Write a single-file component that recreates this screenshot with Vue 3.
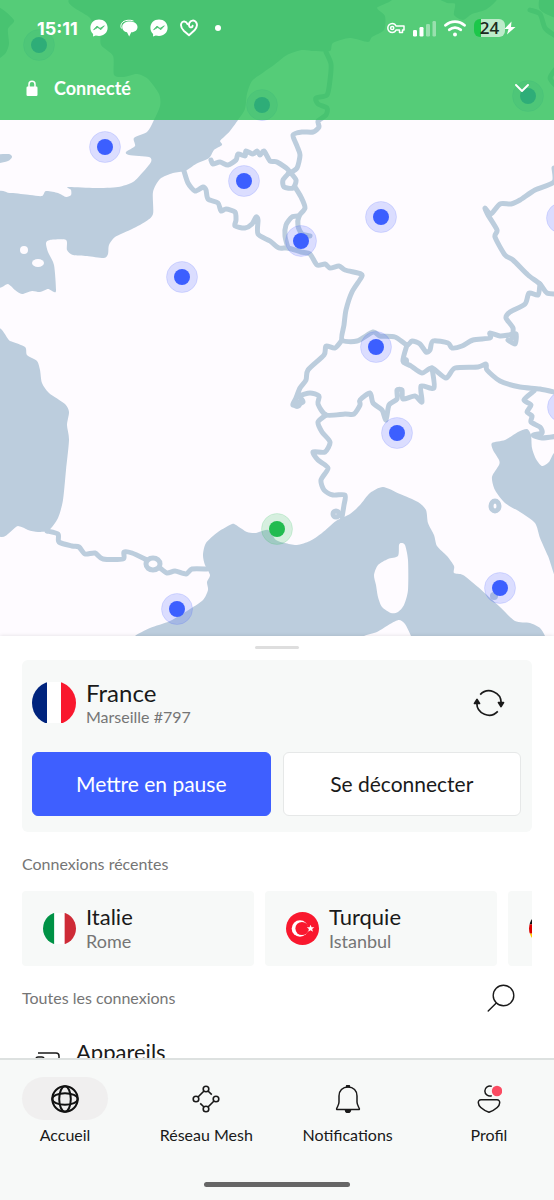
<template>
  <div class="app">
    <!-- Carte -->
    <div class="map-area">
      <svg class="map" viewBox="0 0 554 636" role="img" aria-label="Carte des serveurs">
        <rect width="554" height="636" class="land" />
        <path v-for="(s, i) in seas" :key="'s' + i" :d="smooth(s, true)" class="sea" />
        <path v-for="(l, i) in islands" :key="'l' + i" :d="smooth(l, true)" class="land" />
        <path v-for="(b, i) in borders" :key="'b' + i" :d="smooth(b, false)" class="border" />
        <ellipse cx="24" cy="250" rx="4" ry="4" class="land" />
        <ellipse cx="38" cy="263" rx="6" ry="4" class="land" />
        <ellipse cx="153" cy="564" rx="7" ry="6" class="border" />
        <ellipse cx="495" cy="506" rx="4" ry="5" class="border" />
        <circle cx="336" cy="514" r="3" class="border" />
        <circle cx="494" cy="596" r="4" class="sea" />
        <circle cx="405" cy="361" r="4" class="sea" />
        <circle cx="297" cy="404" r="5" class="sea" />
        <g v-for="(m, i) in markers" :key="'m' + i" :class="['marker', { connected: m.connected }]">
          <circle :cx="m.x" :cy="m.y" r="15.5" class="halo" />
          <circle :cx="m.x" :cy="m.y" r="8" class="dot" />
        </g>
      </svg>

      <header class="top">
        <div class="status-bar">
          <span class="time">15:11</span>
          <svg class="glyph" width="18" height="18" viewBox="0 0 18 18">
            <path d="M9 .5C4 .5.4 4 .4 8.800c0 2.500 1 4.700 2.700 6.200L3 17.600l2.800-1.200c1 .3 2.100.5 3.200.5 5 0 8.600-3.500 8.600-8.200S14 .5 9 .5z" fill="#fff" />
            <path d="M3.600 10.800 7 7.100l3 2.300 4.300-2.600-3.500 3.900-3-2.300z" fill="#4cc473" stroke="#4cc473" stroke-width=".8" />
          </svg>
          <svg class="glyph" width="18" height="18" viewBox="0 0 18 18">
            <path d="M1.500 9.500C.3 7.500.8 4.500 3 2.800 5.500 1 10.500.7 13.500 2" fill="none" stroke="#fff" stroke-width="1" />
            <path d="M9.800 2.500C5.500 2.500 2.200 4.500 2.200 8c0 3 2 4.800 4.800 5.300L9.200 17.500l2-4.200c4-.2 6.300-2.300 6.300-5.300 0-3.300-3.500-5.500-7.700-5.500z" fill="#fff" />
          </svg>
          <svg class="glyph" width="18" height="18" viewBox="0 0 18 18">
            <path d="M9 .5C4 .5.4 4 .4 8.800c0 2.500 1 4.700 2.700 6.200L3 17.600l2.800-1.200c1 .3 2.100.5 3.200.5 5 0 8.600-3.500 8.600-8.200S14 .5 9 .5z" fill="#fff" />
            <path d="M3.600 10.800 7 7.100l3 2.300 4.300-2.600-3.500 3.900-3-2.300z" fill="#4cc473" stroke="#4cc473" stroke-width=".8" />
          </svg>
          <svg class="glyph" width="18" height="18" viewBox="0 0 18 18">
            <path d="M7.500 5.200C6.200 2 2.400 1.600 1.300 4.500c-1 3 .6 5.500 2.700 7.500L9 16.300l5.500-5c2.300-2.600 3.200-6 1.300-8.400-1.800-2.100-5-1.600-6.300.8-.9 1.900-.6 4 .8 4.600 1.200.4 2.200-.4 2.300-1.500" fill="none" stroke="#fff" stroke-width="1.900" stroke-linecap="round" stroke-linejoin="round" />
          </svg>
          <span class="more"></span>
          <div class="status-right">
            <svg width="18" height="12" viewBox="0 0 18 12" fill="none" stroke="#fff" stroke-width="1.500" stroke-linejoin="round">
              <path d="M9 4h8v4h-1.500v2.500h-3V8H9c-.6 1.600-2 2.500-3.700 2.500a4.500 4.500 0 1 1 0-9C7 1.500 8.400 2.400 9 4z" />
              <circle cx="5.200" cy="6" r="1.600" />
            </svg>
            <svg width="23" height="17" viewBox="0 0 23 17" fill="#fff">
              <rect x="0" y="10" width="4" height="6.500" rx="1.200" />
              <rect x="6.500" y="7" width="4" height="9.500" rx="1.200" />
              <rect x="13" y="4" width="4" height="12.500" rx="1.200" opacity=".4" />
              <rect x="19.500" y="1" width="3.500" height="15.500" rx="1.200" opacity=".4" />
            </svg>
            <svg width="22" height="17" viewBox="0 0 22 17" fill="none" stroke="#fff" stroke-width="2.800" stroke-linecap="round">
              <path d="M1.500 5.300c5.500-5 13.500-5 19 0" />
              <path d="M5.300 9.800c3.300-3 8.100-3 11.400 0" />
              <circle cx="11" cy="14.500" r="2" fill="#fff" stroke="none" />
            </svg>
            <span class="battery">
              <span class="level">24</span>
              <svg class="bolt" width="12" height="14" viewBox="0 0 12 14"><path d="M7.500.5.5 8h4l-1.500 5.500L11.500 6h-4.500z" fill="#fff" /></svg>
            </span>
          </div>
        </div>
        <button class="connection" type="button">
          <svg width="12" height="17" viewBox="0 0 12 17">
            <path d="M3 7V4.200a3 3 0 0 1 6 0V7" fill="none" stroke="#fff" stroke-width="1.500" />
            <rect x=".5" y="6.500" width="11" height="9.500" rx="1.200" fill="#fff" />
          </svg>
          <span>Connecté</span>
          <svg class="chevron" width="14" height="9" viewBox="0 0 14 9">
            <path d="m1 1 6 6 6-6" fill="none" stroke="#fff" stroke-width="1.900" stroke-linecap="round" stroke-linejoin="round" />
          </svg>
        </button>
      </header>
    </div>

    <!-- Panneau -->
    <main class="sheet">
      <div class="handle"></div>
      <section class="card">
        <div class="server">
          <svg class="flag-lg" viewBox="0 0 44 44">
            <clipPath id="fr"><circle cx="22" cy="22" r="22" /></clipPath>
            <g clip-path="url(#fr)">
              <rect y="1" width="15" height="41" fill="#00247d" />
              <rect x="15" y="1" width="14" height="41" fill="#fff" />
              <rect x="29" y="1" width="15" height="41" fill="#f9182e" />
            </g>
          </svg>
          <div class="names">
            <span class="country">France</span>
            <span class="city">Marseille #797</span>
          </div>
          <button class="icon-btn refresh" type="button" aria-label="Reconnecter">
            <svg width="32" height="28" viewBox="0 0 32 28" fill="none" stroke="#1a1a1a" stroke-width="1.700">
              <path d="M7.200 5.600A12.200 12.200 0 0 1 28.200 14" />
              <path d="M24.800 22.400A12.200 12.200 0 0 1 3.800 14" />
              <path d="M25.500 13.500h5L28 17.500z" fill="#1a1a1a" stroke-linejoin="round" />
              <path d="M1.500 14.500h5L4 10.500z" fill="#1a1a1a" stroke-linejoin="round" />
            </svg>
          </button>
        </div>
        <div class="actions">
          <button class="btn btn-primary" type="button">Mettre en pause</button>
          <button class="btn" type="button">Se déconnecter</button>
        </div>
      </section>

      <h2 class="section-title">Connexions récentes</h2>
      <div class="recents">
        <button v-for="r in recents" :key="r.flag" class="recent" type="button">
          <svg class="flag" viewBox="0 0 32 32">
            <clipPath :id="'clip-' + r.flag"><circle cx="16" cy="16" r="16" /></clipPath>
            <g :clip-path="'url(#clip-' + r.flag + ')'">
              <template v-if="r.flag === 'it'">
                <rect y="1" width="11" height="30" fill="#009246" />
                <rect x="11" y="1" width="10" height="30" fill="#fff" />
                <rect x="21" y="1" width="11" height="30" fill="#ce2b37" />
              </template>
              <template v-else-if="r.flag === 'tr'">
                <rect width="32" height="32" fill="#f9182e" />
                <circle cx="13.500" cy="16" r="8" fill="#fff" />
                <circle cx="15.500" cy="16" r="6.400" fill="#f9182e" />
                <path d="m23.800 12.300 1 2.500 2.700.1-2.100 1.700.7 2.600-2.300-1.500-2.300 1.500.7-2.600-2.100-1.700 2.700-.1z" fill="#fff" />
              </template>
              <template v-else>
                <rect width="32" height="12" fill="#111" />
                <rect y="12" width="32" height="9" fill="#d00" />
                <rect y="21" width="32" height="11" fill="#fc0" />
              </template>
            </g>
          </svg>
          <span v-if="r.country" class="names">
            <span class="country">{{ r.country }}</span>
            <span class="city">{{ r.city }}</span>
          </span>
        </button>
      </div>

      <div class="all-head">
        <h2 class="section-title">Toutes les connexions</h2>
        <button class="icon-btn" type="button" aria-label="Rechercher">
          <svg width="28" height="28" viewBox="0 0 28 28" fill="none" stroke="#1a1a1a" stroke-width="1.400" stroke-linecap="round">
            <circle cx="16.500" cy="11.500" r="10.300" />
            <path d="M9.300 19 1.200 27" />
          </svg>
        </button>
      </div>
      <a class="device" href="#">
        <svg width="26" height="22" viewBox="0 0 26 22" fill="none" stroke="#1a1a1a" stroke-width="1.500">
          <path d="M3 1h18c2 0 3 1 3 3v13H10" />
          <rect x="1" y="5" width="8" height="14" rx="2" />
        </svg>
        <span>Appareils</span>
      </a>
    </main>

    <!-- Navigation -->
    <footer class="bottom">
      <nav class="tabs">
        <a v-for="t in tabs" :key="t.id" href="#" class="tab" :class="{ active: activeTab === t.id }" @click.prevent="activeTab = t.id">
          <span class="tab-icon">
            <svg v-if="t.id === 'home'" width="28" height="28" viewBox="0 0 28 28" fill="none" stroke="#111" stroke-width="2">
              <circle cx="14" cy="14" r="12.700" />
              <ellipse cx="14" cy="14" rx="5.800" ry="12.700" />
              <ellipse cx="14" cy="14" rx="12.700" ry="5.800" />
            </svg>
            <svg v-else-if="t.id === 'mesh'" width="28" height="28" viewBox="0 0 28 28" fill="none" stroke="#1a1a1a" stroke-width="1.600">
              <circle cx="14" cy="4" r="2.800" />
              <circle cx="4" cy="14" r="2.800" />
              <circle cx="24" cy="14" r="2.800" />
              <circle cx="14" cy="24" r="2.800" />
              <path d="m6 12 6-6M16 6l3.800 3.600M22 16l-6 6M12 22l-3.800-3.600" />
            </svg>
            <svg v-else-if="t.id === 'notif'" width="26" height="28" viewBox="0 0 26 28" fill="none" stroke="#1a1a1a" stroke-width="1.500" stroke-linejoin="round">
              <path d="M13 2C7.500 2 4 5.800 4 11v6c0 2.500-1.300 4.300-2.300 6.500-.3.700 0 1 .6 1h21.400c.6 0 .9-.3.600-1C23.300 21.300 22 19.500 22 17v-6c0-5.200-3.500-9-9-9z" />
              <path d="M11.500 1.700a1.500 1.500 0 0 1 3 0zM10.500 25a2.500 2.500 0 0 0 5 0z" fill="#1a1a1a" />
            </svg>
            <svg v-else width="26" height="28" viewBox="0 0 26 28" fill="none" stroke="#1a1a1a" stroke-width="1.500" stroke-linejoin="round">
              <path d="M15.800 10.600A5 5 0 1 1 15.800 1.400" />
              <path d="M5 14.800h16c1.800 0 2.800 1.200 2.700 3-.2 4.700-4.200 7-10.700 9.400C6.500 24.800 2.500 22.500 2.300 17.800c-.1-1.800.9-3 2.700-3z" />
              <circle cx="21" cy="6" r="5.200" fill="#fb4b62" stroke="none" />
            </svg>
          </span>
          <span class="tab-label">{{ t.label }}</span>
        </a>
      </nav>
      <div class="home-bar"></div>
    </footer>
  </div>
</template>

<script setup>
import { ref } from 'vue'

const activeTab = ref('home')

const tabs = [
  { id: 'home', label: 'Accueil' },
  { id: 'mesh', label: 'Réseau Mesh' },
  { id: 'notif', label: 'Notifications' },
  { id: 'profile', label: 'Profil' },
]

const recents = [
  { country: 'Italie', city: 'Rome', flag: 'it' },
  { country: 'Turquie', city: 'Istanbul', flag: 'tr' },
  { flag: 'de' },
]

const markers = [
  { x: 39, y: 45 },
  { x: 262, y: 105 },
  { x: 528, y: 96 },
  { x: 105, y: 147 },
  { x: 244, y: 181 },
  { x: 381, y: 217 },
  { x: 562, y: 218 },
  { x: 301, y: 241 },
  { x: 182, y: 277 },
  { x: 376, y: 347 },
  { x: 563, y: 407 },
  { x: 397, y: 433 },
  { x: 500, y: 588 },
  { x: 177, y: 609 },
  { x: 277, y: 529, connected: true },
]

// Tracés "x,y x,y ..." de la carte
const seas = [
  // mer du Nord et Manche
  '83,-4 90,18 100,32 101,45 113,56 114,75 124,77 137,74 148,79 159,94 160,106 153,122 147,132 134,138 135,146 126,152 129,155 149,157 151,162 143,172 133,182 118,187 95,188 68,187 71,190 71,195 66,197 58,193 46,191 42,196 30,195 10,193 -4,197 -4,283 8,284 15,290 22,294 32,291 40,292 48,289 54,292 56,290 54,265 48,252 46,243 50,240 66,240 67,250 73,255 87,256 104,258 108,254 109,245 115,237 130,230 145,222 153,214 153,192 160,179 173,173 185,171 196,164 209,158 214,150 222,145 220,141 224,137 230,131 238,120 245,109 247,94 252,81 264,72 274,65 287,55 302,50 314,51 330,51 333,43 350,38 368,42 372,37 384,30 385,16 377,8 376,-4',
  // golfe de Gascogne
  '-4,338 10,341 25,347 27,355 37,361 40,370 42,383 49,393 65,404 69,412 67,425 69,440 66,470 63,500 58,518 49,530 38,532 28,530 18,526 -4,527',
  // Méditerranée
  '128,645 135,636 150,628 170,621 190,609 203,600 208,590 207,582 210,575 205,565 203,555 206,543 218,532 232,524 236,525 247,532 256,533 268,530 276,540 285,543 297,545 310,541 322,533 336,521 350,514 360,505 370,493 383,487 400,494 418,502 426,510 428,523 434,535 437,546 447,556 454,566 454,573 463,575 478,587 500,607 515,621 530,623 540,628 545,636 548,645',
  // Adriatique
  '560,580 548,556 540,538 535,523 520,512 505,503 495,490 492,477 499,465 499,460 493,450 492,443 505,440 518,432 527,429 531,435 532,448 536,459 542,466 549,462 554,453 562,450',
  // Bristol, mer d'Irlande
  '-4,155 9,154 12,157 8,161 -4,163',
  '-4,8 14,20 8,29 9,44 5,54 -4,56',
  // Baltique
  '438,-4 447,3 455,4 454,15 463,20 472,14 487,9 496,-4',
  '541,-4 539,8 546,14 560,18 560,-4',
]

const islands = [
  '401,543 405,545 408,560 408,590 404,605 398,612 391,613 382,607 378,597 376,585 374,575 378,565 388,559 398,556 399,545',
  '355,645 364,636 377,632 390,624 399,620 405,624 411,636 414,645',
]

const borders = [
  '184,171 188,183 195,191 203,187 206,190 208,199 218,203 221,211 226,209 235,212 236,220 235,226 245,228 252,224 256,217 258,220 258,234 270,241 279,248 288,248 301,252 310,254 317,265 325,264 330,268 339,266 345,270 361,274 361,278 352,292 346,310 344,325 342,340 357,341 373,332 380,336 395,337 407,345 412,341 420,344 426,352 430,350 433,341 448,343 452,348 462,346 473,340 490,338 490,333 500,336 509,335 516,334 515,344 508,340',
  '211,160 213,164 220,162 228,165 236,160 238,154 245,156 246,151 253,154 257,151 260,155 264,151 270,161 277,162 289,171 283,180 284,187 293,188 296,180 290,172',
  '326,52 331,64 330,80 327,95 316,98 318,104 327,108 326,115 318,121 319,127 313,132 302,132 293,135 297,146 300,155 297,168 290,173',
  '295,187 301,197 305,208 299,216 298,226 302,234 310,236',
  '299,216 292,217 286,225 285,236 288,248',
  '554,168 554,182 535,190 520,200 511,204 500,204 491,214 485,208 488,215 497,230 495,237 505,255 513,260 528,275 540,284 547,293 558,294',
  '540,284 538,295 529,293 525,304 510,312 506,318 513,328 512,338',
  '342,340 335,348 326,346 324,355 308,370 306,380 300,388 296,398 293,405 303,402 300,396 310,393 319,396 318,404 326,415 345,414 354,414 360,405 360,400 370,393 373,403 382,410 386,420 389,405 397,399 397,390 402,390 403,399 415,396 422,402 421,386 434,388 432,368',
  '407,345 403,361 411,366 422,373 432,368 446,378 455,368 478,367 486,364 487,370 500,381 520,387 540,389 558,393',
  '326,415 318,422 322,432 330,442 325,452 313,452 318,460 328,468 321,480 324,490 333,495 345,495 344,505 342,517',
  '534,391 524,400 531,405 527,412 532,416 531,422 540,427 542,433 533,435 542,438 558,436',
  '47,531 58,534 59,542 72,546 79,547 85,554 95,553 103,559 123,559 124,552 132,553 147,560',
  '160,568 167,573 175,571 186,574 192,569 207,569',
  '530,10 540,14 545,28 554,35',
  '558,66 550,78 558,88',
  '253,73 260,62 268,58 276,54',
]

// Courbe de Catmull-Rom convertie en Bézier
function smooth(text, closed) {
  const pts = text.split(' ').map(p => p.split(',').map(Number))
  const n = pts.length
  const at = i => (closed ? pts[(i + n) % n] : pts[Math.max(0, Math.min(n - 1, i))])
  let d = `M${pts[0]}`
  for (let i = 0; i < (closed ? n : n - 1); i++) {
    const [p0, p1, p2, p3] = [at(i - 1), at(i), at(i + 1), at(i + 2)]
    const c1 = [p1[0] + (p2[0] - p0[0]) / 8, p1[1] + (p2[1] - p0[1]) / 8]
    const c2 = [p2[0] - (p3[0] - p1[0]) / 8, p2[1] - (p3[1] - p1[1]) / 8]
    // les grands côtés (hors cadre) restent droits
    const far = Math.hypot(p2[0] - p1[0], p2[1] - p1[1]) > 80
    d += far ? `L${p2}` : `C${c1} ${c2} ${p2}`
  }
  return closed ? d + 'Z' : d
}
</script>

<style>
body { margin: 0; background: #fff; }
</style>

<style scoped>
.app { display: flex; flex-direction: column; height: 100vh; overflow: hidden; font-family: Lato, sans-serif; color: #1a1a1a; background: #fff; }
button { font-family: inherit; color: inherit; cursor: pointer; }
a { color: inherit; text-decoration: none; }
svg { flex: none; }

.map-area { position: relative; flex: none; }
.map { display: block; width: 100%; height: auto; }
.land { fill: #fefbff; }
.sea { fill: #bccddd; }
.border { fill: none; stroke: #bccddd; stroke-width: 5; stroke-linejoin: round; stroke-linecap: round; }
.halo { fill: #3c5aff; fill-opacity: .18; stroke: #3c5aff; stroke-opacity: .15; }
.dot { fill: #3c5fff; }
.connected .halo { fill: #22bb50; stroke: #22bb50; }
.connected .dot { fill: #22bb50; }

.top { position: absolute; top: 0; left: 0; right: 0; height: 120px; background: rgba(42, 192, 86, .8); color: #fff; }
.status-bar { display: flex; align-items: center; height: 56px; padding: 0 38px 0 37px; }
.time { font-family: Inter, sans-serif; font-size: 18px; font-weight: 700; width: 53px; }
.glyph { margin-right: 12px; }
.more { width: 6px; height: 6px; border-radius: 50%; background: #fff; margin-left: 5px; }
.status-right { display: flex; align-items: center; gap: 8px; margin-left: auto; }
.battery { display: flex; align-items: center; }
.level { width: 31px; height: 18px; line-height: 18px; border-radius: 6px; background: linear-gradient(90deg, #1cc74a 24%, #bdebca 24%); color: #1c2a20; font-family: "Open Sans", sans-serif; font-size: 17px; font-weight: 600; text-align: center; }
.bolt { margin-left: -1px; }
.connection { display: flex; align-items: center; width: 100%; height: 64px; padding: 0 25px 0 26px; border: 0; background: none; color: #fff; font-size: 18px; font-weight: 700; }
.connection span { margin-left: 16px; }
.chevron { margin-left: auto; }

.sheet { flex: 1; min-height: 0; overflow: hidden; padding: 10px 22px 0; background: #fff; box-shadow: 0 0 4px rgba(0, 0, 0, .12); position: relative; }
.handle { width: 44px; height: 3px; margin: 0 auto 11px; border-radius: 2px; background: #dedede; }
.card { padding: 19px 11px 16px 10px; border-radius: 6px; background: #f7f9f8; }
.server { display: flex; align-items: center; gap: 10px; margin-bottom: 25px; }
.flag-lg { width: 44px; height: 44px; }
.names { display: flex; flex-direction: column; text-align: left; }
.server .country { font-size: 24px; line-height: 28px; }
.server .city { font-size: 16px; line-height: 20px; }
.city { color: #757575; }
.icon-btn { display: flex; padding: 0; border: 0; background: none; }
.refresh { margin: 0 16px 0 auto; }
.actions { display: flex; gap: 12px; }
.btn { flex: 1; height: 64px; padding: 0 6px 2px; border: 1px solid #e6e8e8; border-radius: 6px; background: #fff; font-size: 21px; }
.btn-primary { background: #3e5fff; border-color: #3e5fff; color: #fff; }

.section-title { margin: 0; font-size: 16px; font-weight: 400; line-height: 20px; color: #757575; }
.card + .section-title { margin: 22px 0 17px; }
.recents { display: flex; gap: 11px; overflow: hidden; }
.recent { display: flex; flex: none; align-items: center; gap: 10px; width: 232px; height: 75px; padding: 0 21px; border: 0; border-radius: 4px; background: #f7f9f8; }
.flag { width: 33px; height: 33px; }
.recent .country { font-size: 22px; line-height: 25px; }
.recent .city { font-size: 18px; line-height: 24px; }
.all-head { display: flex; align-items: center; justify-content: space-between; height: 64px; padding-right: 17px; }
.device { display: flex; align-items: flex-start; gap: 15px; padding: 8px 13px; font-size: 22px; line-height: 28px; }
.device svg { margin-top: 14px; }

.bottom { flex: none; border-top: 2px solid #dde1e0; background: #f7f9f8; position: relative; padding-bottom: 13px; }
.tabs { display: flex; justify-content: space-between; padding: 17px 22px 0; }
.tab { display: flex; flex-direction: column; align-items: center; gap: 5px; width: 86px; font-size: 16px; line-height: 20px; white-space: nowrap; }
.tab-icon { display: flex; align-items: center; justify-content: center; width: 86px; height: 43px; border-radius: 22px; }
.tab.active .tab-icon { background: #f0efef; }
.home-bar { width: 146px; height: 5px; margin: 37px auto 0; border-radius: 3px; background: #666; }
</style>
